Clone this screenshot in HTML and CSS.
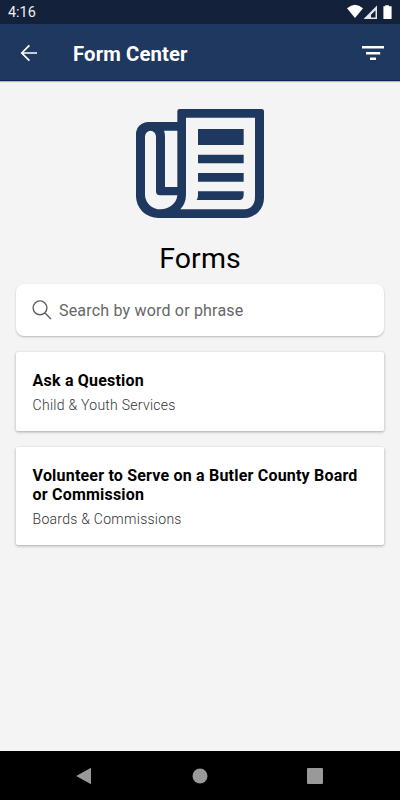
FILE: index.html
```html
<!DOCTYPE html>
<html lang="en">
<head>
<meta charset="utf-8">
<title>Form Center</title>
<link rel="stylesheet" href="styles.css">
</head>
<body>
<div class="status">
  <span class="time">4:16</span>
  <svg class="status-icons" width="48" height="16" viewBox="0 0 48 16" fill="#fff">
    <path d="M0 4.2Q8-2.8 16 4.2L8 14Z"/>
    <path fill-rule="evenodd" d="M30 1.5V15H16.5ZM28.5 6.3L24 10.8V13.5H28.5Z" fill="#e4e6e9"/>
    <path d="M38.200 1.200H42V2.300H44.600V14.400Q44.600 15 44 15H37Q36.400 15 36.400 14.400V2.300H38.200Z"/>
  </svg>
</div>
<header class="bar">
  <svg class="back" width="18" height="18" viewBox="0 0 18 18" fill="none" stroke="#fff" stroke-width="1.700"><path d="M17 9H2M9.400 1.400L1.800 9L9.400 16.600"/></svg>
  <h1 class="title">Form Center</h1>
  <svg class="filter" width="24" height="16" viewBox="0 0 24 16" fill="#fff"><path d="M1 1H23V3.400H1ZM5 7H19.200V9.400H5ZM9 12.600H15V15H9Z"/></svg>
</header>
<main class="content">
  <svg class="paper" width="150" height="130" viewBox="0 0 450 390" fill="#1f3860">
    <path fill-rule="evenodd" d="M157 72V40Q157 33 164 33H410Q417 33 417 40V300A60 60 0 0 1 357 360H100A67 65 0 0 1 33 295V108A37 36 0 0 1 70 72ZM183 59V290Q183 315 166 334H352Q390 334 390 296V59ZM60 116V290C60 315 82 334 106 334C132 334 155 317 157 292H105Q93 292 93 280V116A16.500 18 0 0 0 60 116ZM117 98Q120 105 120 115V267H157V98Z"/>
    <path d="M219 93H356V141H219ZM219 170H356V196H219ZM219 225H356V251H219ZM219 280H356V290Q356 306 342 306H215Q219 300 219 292Z"/>
  </svg>
  <h2 class="heading">Forms</h2>
  <div class="search">
    <svg width="20" height="20" viewBox="0 0 20 20" fill="none" stroke="#606060" stroke-width="1.400"><circle cx="8" cy="7.800" r="6.900"/><path d="M12.800 12.700L19 18.900"/></svg>
    <span class="placeholder">Search by word or phrase</span>
  </div>
  <article class="card">
    <h3 class="name">Ask a Question</h3>
    <p class="dept">Child &amp; Youth Services</p>
  </article>
  <article class="card">
    <h3 class="name">Volunteer to Serve on a Butler County Board<br>or Commission</h3>
    <p class="dept">Boards &amp; Commissions</p>
  </article>
</main>
<nav class="nav">
  <svg width="16" height="18" viewBox="0 0 16 18" fill="#999"><path d="M.2 9L15 .7V17.300Z"/></svg>
  <svg width="16" height="16" viewBox="0 0 16 16" fill="#999"><circle cx="8" cy="8" r="7.500"/></svg>
  <svg width="16" height="16" viewBox="0 0 16 16" fill="#999"><rect width="16" height="16" rx="1"/></svg>
</nav>
</body>
</html>
```
FILE: styles.css
```css
* { box-sizing: border-box; margin: 0; }
body {
  width: 400px;
  height: 800px;
  overflow: hidden;
  display: flex;
  flex-direction: column;
  background: #f4f4f4;
  font-family: Roboto, sans-serif;
  color: #000;
}
svg { display: block; flex: none; }
.status {
  height: 24px;
  flex: none;
  display: flex;
  justify-content: space-between;
  padding: 4px 5px 0 8px;
  background: #14213a;
}
.time { font-size: 14.4px; line-height: 18px; color: #eee; }
.bar {
  height: 57px;
  flex: none;
  display: flex;
  align-items: center;
  padding: 1px 15px 0 20px;
  background: #1f3860;
  border-bottom: 1px solid #0c2458;
  box-shadow: 0 1px 1px rgba(0, 0, 0, .25);
}
.title {
  margin-left: 35px;
  flex: 1;
  font-size: 20.3px;
  line-height: 26px;
  font-weight: 700;
  letter-spacing: .13px;
  color: #fff;
  padding-top: 3px;
}
.content { flex: 1; padding: 17px 16px 0; }
.paper { margin: 0 auto; }
.heading {
  margin-top: 14px;
  height: 42px;
  font-size: 28.5px;
  line-height: 34px;
  font-weight: 400;
  letter-spacing: .1px;
  text-align: center;
}
.search {
  display: flex;
  align-items: center;
  gap: 7px;
  height: 52px;
  padding: 0 16px;
  background: #fff;
  border-radius: 8px;
  box-shadow: 0 1px 2px rgba(0, 0, 0, .25);
  margin-bottom: 16px;
}
.placeholder {
  font-size: 16px;
  line-height: 20px;
  letter-spacing: .19px;
  color: #666;
  padding-top: 1px;
}
.card {
  padding: 19px 16px 17px 16.6px;
  margin-bottom: 16px;
  background: #fff;
  border-radius: 2px;
  box-shadow: 0 1px 3px rgba(0, 0, 0, .32);
}
.name {
  font-size: 16px;
  line-height: 19px;
  font-weight: 700;
  letter-spacing: .2px;
  white-space: nowrap;
}
.dept {
  margin-top: 6px;
  font-size: 14px;
  line-height: 18px;
  font-weight: 300;
  letter-spacing: .27px;
  color: #333;
}
.nav {
  height: 49px;
  flex: none;
  display: flex;
  align-items: center;
  justify-content: space-between;
  padding: 0 77px 0 76px;
  background: #000;
}
```
